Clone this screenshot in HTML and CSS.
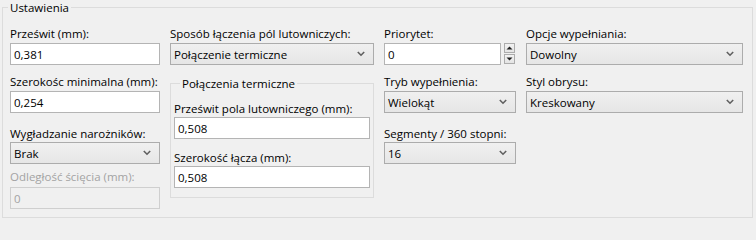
FILE: index.html
```html
<!DOCTYPE html>
<html lang="pl">
<head>
<meta charset="utf-8">
<title>Ustawienia</title>
<link rel="stylesheet" href="styles.css">
</head>
<body>
<fieldset class="group outer">
  <legend class="legend">Ustawienia</legend>
  <div class="grid">
    <!-- column 1 -->
    <div class="lbl c1 r1">Prześwit (mm):</div>
    <div class="edit c1 r2">0,381</div>
    <div class="lbl c1 r3">Szerokośc minimalna (mm):</div>
    <div class="edit c1 r4">0,254</div>
    <div class="lbl c1 r5">Wygładzanie narożników:</div>
    <div class="combo c1 r6"><span>Brak</span><svg class="chev" width="8" height="6" viewBox="0 0 8 6"><polyline points="0.8,1 4,4.2 7.2,1" fill="none" stroke="#606060" stroke-width="1.6"/></svg></div>
    <div class="lbl dis c1 r7">Odległość ścięcia (mm):</div>
    <div class="edit disabled c1 r8">0</div>

    <!-- column 2 -->
    <div class="lbl c2 r1">Sposób łączenia pól lutowniczych:</div>
    <div class="combo c2 r2"><span>Połączenie termiczne</span><svg class="chev" width="8" height="6" viewBox="0 0 8 6"><polyline points="0.8,1 4,4.2 7.2,1" fill="none" stroke="#606060" stroke-width="1.6"/></svg></div>
    <fieldset class="group inner c2">
      <legend class="legend">Połączenia termiczne</legend>
      <div class="lbl">Prześwit pola lutowniczego (mm):</div>
      <div class="edit">0,508</div>
      <div class="lbl second">Szerokość łącza (mm):</div>
      <div class="edit">0,508</div>
    </fieldset>

    <!-- column 3 -->
    <div class="lbl c3 r1">Priorytet:</div>
    <div class="spin c3 r2">
      <div class="edit spin-edit">0</div>
      <div class="spin-btns">
        <div class="spin-btn"><svg width="7" height="4" viewBox="0 0 7 4"><polygon points="0.5,3.5 3.5,0.5 6.5,3.5" fill="#202020"/></svg></div>
        <div class="spin-btn"><svg width="7" height="4" viewBox="0 0 7 4"><polygon points="0.5,0.5 3.5,3.5 6.5,0.5" fill="#202020"/></svg></div>
      </div>
    </div>
    <div class="lbl c3 r3">Tryb wypełnienia:</div>
    <div class="combo c3 r4"><span>Wielokąt</span><svg class="chev" width="8" height="6" viewBox="0 0 8 6"><polyline points="0.8,1 4,4.2 7.2,1" fill="none" stroke="#606060" stroke-width="1.6"/></svg></div>
    <div class="lbl c3 r5">Segmenty / 360 stopni:</div>
    <div class="combo c3 r6"><span>16</span><svg class="chev" width="8" height="6" viewBox="0 0 8 6"><polyline points="0.8,1 4,4.2 7.2,1" fill="none" stroke="#606060" stroke-width="1.6"/></svg></div>

    <!-- column 4 -->
    <div class="lbl c4 r1">Opcje wypełniania:</div>
    <div class="combo c4 r2"><span>Dowolny</span><svg class="chev" width="8" height="6" viewBox="0 0 8 6"><polyline points="0.8,1 4,4.2 7.2,1" fill="none" stroke="#606060" stroke-width="1.6"/></svg></div>
    <div class="lbl c4 r3">Styl obrysu:</div>
    <div class="combo c4 r4"><span>Kreskowany</span><svg class="chev" width="8" height="6" viewBox="0 0 8 6"><polyline points="0.8,1 4,4.2 7.2,1" fill="none" stroke="#606060" stroke-width="1.6"/></svg></div>
  </div>
</fieldset>
</body>
</html>
```

FILE: styles.css
```css
* { box-sizing: border-box; }

html, body {
  margin: 0;
  padding: 0;
  background: #f0f0f0;
}

body {
  font-family: "Open Sans", "Noto Sans", "Liberation Sans", sans-serif;
  font-size: 11.5px;
  line-height: 15px;
  color: #000;
  width: 756px;
  height: 219px;
  overflow: hidden;
}

.group {
  border: 1px solid #dcdcdc;
  margin: 0;
  padding: 0;
  min-width: 0;
}

.legend {
  padding: 0 2px;
  line-height: 15px;
}

.outer {
  margin: 0 3px 0 2px;
  height: 218px;
}

.outer > .legend {
  margin-left: 5px;
}

.grid {
  display: grid;
  grid-template-columns: 150px 204px 132px 217px;
  column-gap: 10px;
  grid-template-rows: 17px 31px 17px 35px 16px 27px 18px 22px;
  padding: 11px 9px 0 7px;
}

.c1 { grid-column: 1; }
.c2 { grid-column: 2; }
.c3 { grid-column: 3; }
.c4 { grid-column: 4; }
.r1 { grid-row: 1; }
.r2 { grid-row: 2; }
.r3 { grid-row: 3; }
.r4 { grid-row: 4; }
.r5 { grid-row: 5; }
.r6 { grid-row: 6; }
.r7 { grid-row: 7; }
.r8 { grid-row: 8; }

.lbl {
  white-space: nowrap;
  align-self: start;
  height: 15px;
}

.lbl.dis { color: #a3a3a3; }

.edit {
  align-self: start;
  height: 22px;
  background: #fff;
  border: 1px solid #b4b4b4;
  padding: 3px 0 0 3px;
  white-space: nowrap;
}

.edit.disabled {
  background: #f0f0f0;
  border-color: #cfcfcf;
  color: #a3a3a3;
}

.combo {
  align-self: start;
  height: 22px;
  border: 1px solid #acacac;
  background: linear-gradient(#f0f0f0, #e6e6e6);
  display: flex;
  align-items: center;
  justify-content: space-between;
  padding: 0 8px 0 3px;
  white-space: nowrap;
}

.chev { display: block; }

.inner {
  grid-row: 3 / 9;
  align-self: start;
  margin-top: 2px;
  padding: 10px 3px 9px 3px;
  display: flex;
  flex-direction: column;
}

.inner > .legend {
  margin-left: 6px;
}

.inner .lbl { margin-bottom: 1px; }
.inner .lbl.second { margin-top: 11px; }
.inner .edit { align-self: stretch; }

.spin {
  align-self: start;
  display: flex;
  gap: 2px;
  height: 22px;
}

.spin-edit {
  width: 117px;
}

.spin-btns {
  display: flex;
  flex-direction: column;
  gap: 1px;
  margin-left: 1px;
}

.spin-btn {
  width: 11px;
  height: 10px;
  border: 1px solid #acacac;
  background: linear-gradient(#f2f2f2, #e4e4e4);
  display: flex;
  align-items: center;
  justify-content: center;
}

.spin-btn svg { display: block; }
```
